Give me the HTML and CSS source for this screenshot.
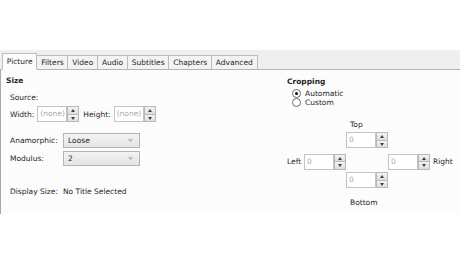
FILE: index.html
```html
<!DOCTYPE html>
<html lang="en">
<head>
    <meta charset="UTF-8">
    <title>Picture Settings</title>
    <link rel="stylesheet" href="styles.css">
</head>
<body>
    <div class="window">
        <div class="tabs">
            <div class="tab active">Picture</div>
            <div class="tab">Filters</div>
            <div class="tab">Video</div>
            <div class="tab">Audio</div>
            <div class="tab">Subtitles</div>
            <div class="tab">Chapters</div>
            <div class="tab">Advanced</div>
        </div>

        <div class="panel">
            <div class="size-col">
                <div class="heading">Size</div>
                <div class="row source">Source:</div>
                <div class="row dims">
                    <span class="lbl-width">Width:</span>
                    <div class="spin"><div class="spin-box muted">(none)</div><div class="spin-btns"><span class="up"></span><span class="down"></span></div></div>
                    <span class="lbl-height">Height:</span>
                    <div class="spin"><div class="spin-box muted">(none)</div><div class="spin-btns"><span class="up"></span><span class="down"></span></div></div>
                </div>
                <div class="row field first">
                    <span class="field-label">Anamorphic:</span>
                    <div class="select">Loose<span class="chev"></span></div>
                </div>
                <div class="row field">
                    <span class="field-label">Modulus:</span>
                    <div class="select">2<span class="chev"></span></div>
                </div>
                <div class="row display">
                    <span class="field-label">Display Size:</span>
                    <span>No Title Selected</span>
                </div>
            </div>

            <div class="crop-col">
                <div class="heading">Cropping</div>
                <div class="radios">
                    <div class="radio-row"><span class="radio checked"></span>Automatic</div>
                    <div class="radio-row"><span class="radio"></span>Custom</div>
                </div>
                <div class="crop-grid">
                    <span class="crop-top-label">Top</span>
                    <div class="spin crop-top"><div class="spin-box muted">0</div><div class="spin-btns"><span class="up"></span><span class="down"></span></div></div>
                    <span class="crop-left-label">Left</span>
                    <div class="spin crop-left"><div class="spin-box muted">0</div><div class="spin-btns"><span class="up"></span><span class="down"></span></div></div>
                    <div class="spin crop-right"><div class="spin-box muted">0</div><div class="spin-btns"><span class="up"></span><span class="down"></span></div></div>
                    <span class="crop-right-label">Right</span>
                    <div class="spin crop-bottom"><div class="spin-box muted">0</div><div class="spin-btns"><span class="up"></span><span class="down"></span></div></div>
                    <span class="crop-bottom-label">Bottom</span>
                </div>
            </div>
        </div>
    </div>
</body>
</html>
```

FILE: styles.css
```css
body {
    margin: 0;
    background: #ffffff;
    font-family: "DejaVu Sans", Verdana, sans-serif;
    font-size: 7.5px;
    color: #262626;
}

.window {
    padding-top: 50px;
}

.tabs {
    display: flex;
    align-items: flex-end;
    height: 19px;
    padding-left: 2px;
    background: #efefef;
    border-bottom: 1px solid #b4b4b4;
}

.tab {
    height: 13px;
    line-height: 13px;
    padding: 0 3.8px;
    margin-bottom: -1px;
    background: #f3f3f3;
    border: 1px solid #bcbcbc;
    border-left: none;
    border-bottom: 1px solid #b4b4b4;
}

.tab.active {
    height: 15px;
    line-height: 16px;
    background: #fcfcfc;
    border-left: 1px solid #bcbcbc;
    border-bottom-color: #fcfcfc;
}

.panel {
    display: flex;
    height: 144px;
    background: #fcfcfc;
    border-left: 1px solid #a8a8a8;
}

.size-col {
    width: 280px;
    box-sizing: border-box;
    padding: 6px 0 0 5px;
}

.heading {
    font-weight: bold;
    height: 10px;
    line-height: 10px;
}

.row {
    display: flex;
    align-items: center;
    padding-left: 4px;
}

.source {
    margin-top: 7px;
}

.dims {
    margin-top: 4px;
    gap: 3px;
}

.lbl-height {
    margin-left: 1px;
}

.field {
    margin-top: 3px;
}

.field.first {
    margin-top: 11px;
}

.field-label {
    width: 53px;
}

.display {
    margin-top: 21px;
}

.muted {
    color: #a8a8a8;
}

.spin {
    display: flex;
    height: 16px;
}

.spin-box {
    width: 30px;
    border: 1px solid #c4c4c4;
    background: #ffffff;
    line-height: 14px;
    padding-left: 2px;
    box-sizing: border-box;
}

.spin-btns {
    display: flex;
    flex-direction: column;
    width: 12px;
}

.spin-btns span {
    flex: 1;
    border: 1px solid #b8b8b8;
    background: linear-gradient(#f4f4f4, #dedede);
    position: relative;
}

.spin-btns .down {
    border-top: none;
}

.spin-btns span::after {
    content: '';
    position: absolute;
    left: 3px;
    top: 2px;
    border-left: 2.5px solid transparent;
    border-right: 2.5px solid transparent;
}

.spin-btns .up::after {
    border-bottom: 3px solid #404040;
}

.spin-btns .down::after {
    border-top: 3px solid #404040;
}

.select {
    position: relative;
    width: 77px;
    height: 15px;
    line-height: 14px;
    padding-left: 4px;
    box-sizing: border-box;
    border: 1px solid #b4b4b4;
    background: linear-gradient(#f3f3f3, #e4e4e4);
}

.chev {
    position: absolute;
    right: 7px;
    top: 4px;
    width: 2px;
    height: 2px;
    border-right: 1px solid #9a9a9a;
    border-bottom: 1px solid #9a9a9a;
    transform: rotate(45deg);
}

.crop-col {
    padding: 7px 0 0 6px;
}

.radios {
    padding-left: 5px;
    margin-top: 2px;
}

.radio-row {
    display: flex;
    align-items: center;
    height: 9px;
    gap: 4px;
}

.radio {
    width: 7px;
    height: 7px;
    border: 1px solid #6e6e6e;
    border-radius: 50%;
    background: #ffffff;
    position: relative;
}

.radio.checked::after {
    content: '';
    position: absolute;
    left: 2px;
    top: 2px;
    width: 3px;
    height: 3px;
    border-radius: 50%;
    background: #111111;
}

.crop-grid {
    display: grid;
    grid-template-columns: 17px 42px 42px 42px auto;
    grid-template-rows: 15px 19px 21px 16px 19px;
    margin-top: 10px;
    align-items: center;
}

.crop-top-label {
    grid-column: 3;
    grid-row: 1;
    padding-left: 4px;
}

.crop-top {
    grid-column: 3;
    grid-row: 2;
    align-self: start;
}

.crop-left-label {
    grid-column: 1;
    grid-row: 3;
}

.crop-left {
    grid-column: 2;
    grid-row: 3;
}

.crop-right {
    grid-column: 4;
    grid-row: 3;
}

.crop-right-label {
    grid-column: 5;
    grid-row: 3;
    padding-left: 3px;
}

.crop-bottom {
    grid-column: 3;
    grid-row: 4;
}

.crop-bottom-label {
    grid-column: 3;
    grid-row: 5;
    padding-left: 4px;
    align-self: end;
}
```
